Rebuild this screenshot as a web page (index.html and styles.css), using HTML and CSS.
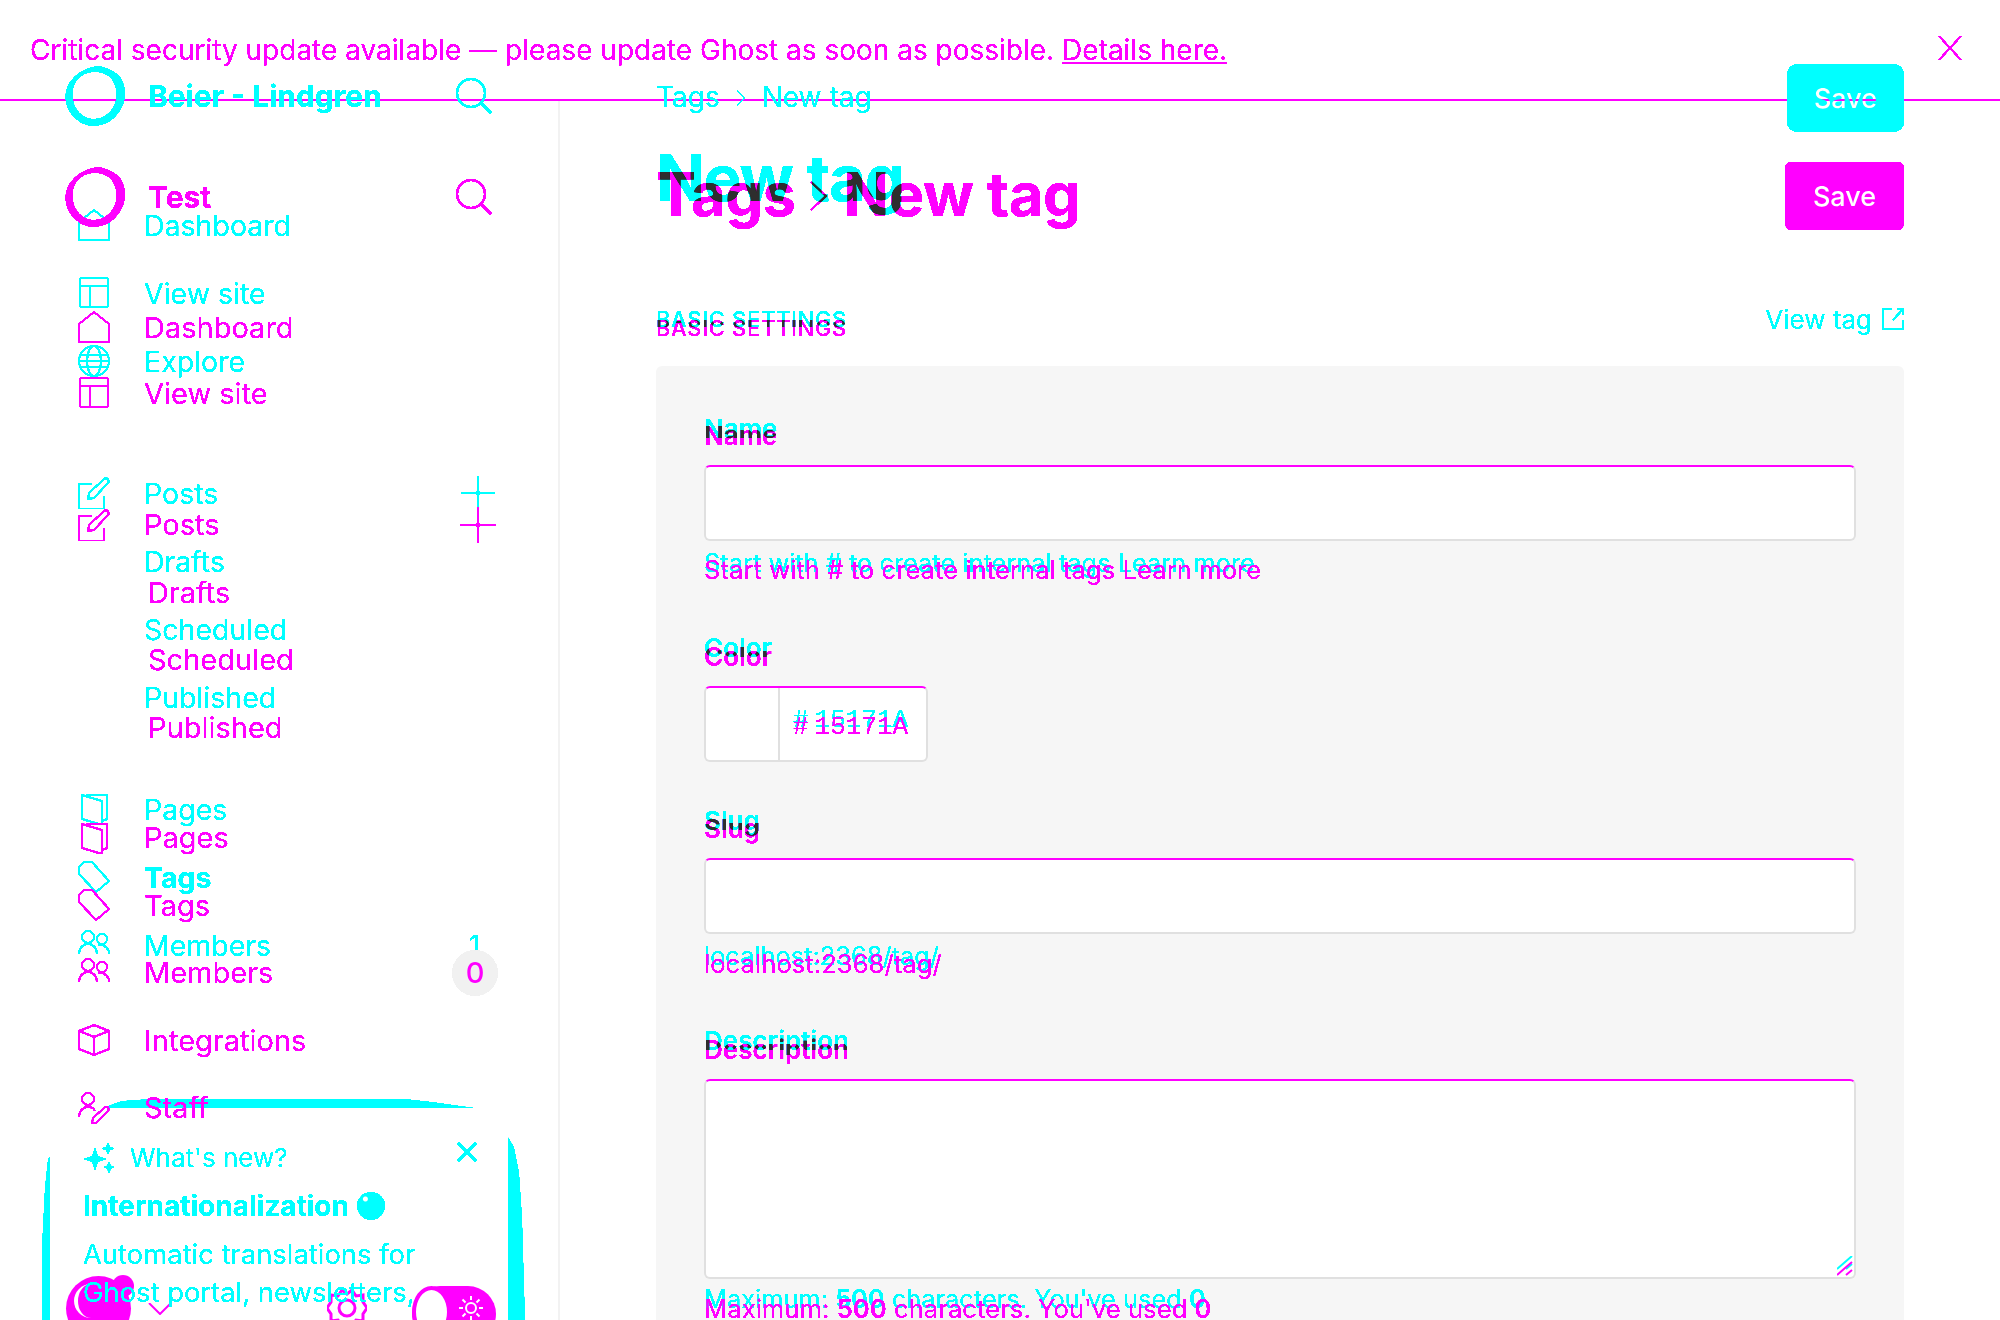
FILE: index.html
```html
<!DOCTYPE html>
<html lang="en">
<head>
    <meta charset="UTF-8">
    <title>Ghost Admin - New tag</title>
    <link rel="stylesheet" href="styles.css">
</head>
<body>
    <svg class="defs" xmlns="http://www.w3.org/2000/svg">
        <!-- hard edged ink, no antialiasing -->
        <filter id="hard" color-interpolation-filters="sRGB" x="0" y="0" width="100%" height="100%">
            <feComponentTransfer><feFuncA type="linear" slope="20" intercept="-6"/></feComponentTransfer>
        </filter>
        <!-- same, and pixels inked by both layers come out dark -->
        <filter id="overlap" color-interpolation-filters="sRGB" x="0" y="0" width="100%" height="100%">
            <feColorMatrix in="SourceGraphic" type="matrix" values="1 0 0 0 0  0 1 0 0 0  1 1 0 0 0  0 0 0 1 0" result="ink"/>
            <feColorMatrix in="SourceGraphic" type="matrix" values="0 0 0 0 .18  0 0 0 0 .18  0 0 0 0 .18  -1 -1 0 1 0" result="dark"/>
            <feMerge result="both"><feMergeNode in="ink"/><feMergeNode in="dark"/></feMerge>
            <feComponentTransfer in="both"><feFuncA type="linear" slope="20" intercept="-6"/></feComponentTransfer>
        </filter>
        <symbol id="i-logo" viewBox="0 0 60 60"><path fill="currentColor" fill-rule="evenodd" d="M33 0c8 1 23 7 25 18 3 9 2 20-5 29-6 8-15 13-25 13C14 60 0 47 0 31 0 15 14 2 33 0zM29 6C16 6 7 16 7 29c0 13 10 24 21 24 12 0 23-11 23-24C51 15 43 6 29 6z"/></symbol>
        <symbol id="i-search" viewBox="0 0 36 36"><circle cx="15" cy="15" r="14"/><path d="M25 25l10 10"/></symbol>
        <symbol id="i-home" viewBox="0 0 32 32"><path d="M1 13L16 1l15 12v18H1z"/></symbol>
        <symbol id="i-layout" viewBox="0 0 32 32"><rect x="2" y="1" width="28" height="29" rx="2"/><path d="M2 9h28M12 9v21"/></symbol>
        <symbol id="i-globe" viewBox="0 0 32 32"><circle cx="16" cy="16" r="15"/><ellipse cx="16" cy="16" rx="7" ry="15"/><path d="M3 10h26M3 22h26M1 16h30"/></symbol>
        <symbol id="i-post" viewBox="0 0 32 32"><path d="M14 7H1v25h25V19"/><path d="M11 16L26 2c3-2 6 1 4 4L16 21l-6 1z"/></symbol>
        <symbol id="i-pages" viewBox="0 0 32 32"><path d="M4 2l20 6v24L4 26z"/><path d="M8 2h21v24l-5 2"/></symbol>
        <symbol id="i-tag" viewBox="0 0 32 32"><path d="M1 13V6l5-5h8l17 19-13 11z"/></symbol>
        <symbol id="i-members" viewBox="0 0 32 32"><circle cx="10" cy="8" r="6"/><path d="M1 25c0-6 4-10 9-10s9 4 9 10"/><circle cx="24" cy="10" r="5"/><path d="M20 16c6-1 11 3 11 9"/></symbol>
        <symbol id="i-box" viewBox="0 0 32 32"><path d="M16 1l15 6v18l-15 6-15-6V7zM1 7l15 6 15-6M16 13v18"/></symbol>
        <symbol id="i-staff" viewBox="0 0 32 32"><circle cx="10" cy="7" r="6"/><path d="M1 25c0-6 4-10 9-10 3 0 6 1 7 4"/><path d="M15 26L27 15c2-1 5 1 3 4L18 31l-4 0z"/></symbol>
        <symbol id="i-plus" viewBox="0 0 36 36"><path d="M18 0v36M0 18h36"/></symbol>
        <symbol id="i-close" viewBox="0 0 24 24"><path d="M1 0l22 24M23 0L1 24"/></symbol>
        <symbol id="i-chevron" viewBox="0 0 18 30"><path d="M1 1l15 14L1 29"/></symbol>
        <symbol id="i-external" viewBox="0 0 22 22"><path d="M10 1H1v20h20v-9"/><path d="M11 12L21 1M15 1h6v6"/></symbol>
    </svg>

    <div class="screen">
        <div class="banner">
            <p class="banner-text">Critical security update available — please update Ghost as soon as possible. <a href="#">Details here.</a></p>
            <svg class="icon banner-close"><use href="#i-close"/></svg>
        </div>

        <div class="side-rule"></div>

        <!-- user bar, sits under the cyan card -->
        <div class="side-foot">
            <span class="avatar"><span class="avatar-shine"></span></span>
            <span class="avatar-dot"></span>
            <svg class="foot-chevron" viewBox="0 0 24 12"><path d="M1 0l11 11L23 0"/></svg>
            <svg class="foot-gear" viewBox="0 0 40 40">
                <path d="M15 1l5 4 5-4 4 6 7-1 0 7 4 6-4 6 0 7-7-1-4 6-5-4-5 4-4-6-7 1 0-7-4-6 4-6 0-7 7 1z"/>
                <circle cx="20" cy="19" r="8"/>
            </svg>
            <span class="toggle">
                <span class="toggle-knob"></span>
                <svg class="toggle-sun" viewBox="0 0 24 24"><circle cx="12" cy="12" r="5"/><path d="M12 0v4M12 20v4M0 12h4M20 12h4M3.5 3.5l3 3M17.5 17.5l3 3M3.5 20.5l3-3M17.5 6.5l3-3"/></svg>
            </span>
        </div>

        <aside class="side side-cyan">
            <div class="side-head">
                <svg class="side-logo"><use href="#i-logo"/></svg>
                <strong class="side-name">Beier - Lindgren</strong>
                <svg class="icon side-search"><use href="#i-search"/></svg>
            </div>
            <nav class="nav">
                <div class="nav-group">
                    <a class="nav-row"><svg class="icon nav-icon"><use href="#i-home"/></svg>Dashboard</a>
                    <a class="nav-row"><svg class="icon nav-icon"><use href="#i-layout"/></svg>View site</a>
                    <a class="nav-row"><svg class="icon nav-icon"><use href="#i-globe"/></svg>Explore</a>
                </div>
                <div class="nav-group">
                    <a class="nav-row"><svg class="icon nav-icon"><use href="#i-post"/></svg>Posts<svg class="icon nav-plus"><use href="#i-plus"/></svg></a>
                    <a class="nav-row nav-sub">Drafts</a>
                    <a class="nav-row nav-sub">Scheduled</a>
                    <a class="nav-row nav-sub">Published</a>
                </div>
                <div class="nav-group">
                    <a class="nav-row"><svg class="icon nav-icon"><use href="#i-pages"/></svg>Pages</a>
                    <a class="nav-row nav-active"><svg class="icon nav-icon"><use href="#i-tag"/></svg>Tags</a>
                    <a class="nav-row"><svg class="icon nav-icon"><use href="#i-members"/></svg>Members<span class="nav-count">1</span></a>
                </div>
            </nav>
            <section class="card">
                <svg class="card-edge" viewBox="0 0 500 233">
                    <path d="M70 21L90 14 118 12H373L400 15 443 21z"/>
                    <path d="M18 70L16 72 13 100 10 160V233H18z"/>
                    <path d="M476 50L482 60 487 85 490 130 493 233H476z"/>
                </svg>
                <div class="card-top">
                    <svg class="card-spark" viewBox="0 0 32 32"><path d="M12 5l3 9 9 3-9 3-3 9-3-9-9-3 9-3zM25 0l2 4.5 4.500 2-4.500 2L25 13l-2-4.500-4.500-2 4.500-2zM26 19l2 4.500 4 1.500-4 2-2 4.500-2-4.500-4-2 4-1.500z"/></svg>
                    <span class="card-kicker">What's new?</span>
                    <svg class="card-close" viewBox="0 0 20 20"><path d="M1 1l18 18M19 1L1 19"/></svg>
                </div>
                <h3 class="card-title">Internationalization<span class="card-globe"></span></h3>
                <p class="card-body">Automatic translations for<br>Ghost portal, newsletters,</p>
            </section>
        </aside>

        <aside class="side side-magenta">
            <div class="side-head">
                <svg class="side-logo"><use href="#i-logo"/></svg>
                <strong class="side-name">Test</strong>
                <svg class="icon side-search"><use href="#i-search"/></svg>
            </div>
            <nav class="nav">
                <div class="nav-group nav-group-tight">
                    <a class="nav-row"><svg class="icon nav-icon"><use href="#i-home"/></svg>Dashboard</a>
                    <a class="nav-row"><svg class="icon nav-icon"><use href="#i-layout"/></svg>View site</a>
                </div>
                <div class="nav-group">
                    <a class="nav-row"><svg class="icon nav-icon"><use href="#i-post"/></svg>Posts<svg class="icon nav-plus"><use href="#i-plus"/></svg></a>
                    <a class="nav-row nav-sub">Drafts</a>
                    <a class="nav-row nav-sub">Scheduled</a>
                    <a class="nav-row nav-sub">Published</a>
                </div>
                <div class="nav-group">
                    <a class="nav-row"><svg class="icon nav-icon"><use href="#i-pages"/></svg>Pages</a>
                    <a class="nav-row"><svg class="icon nav-icon"><use href="#i-tag"/></svg>Tags</a>
                    <a class="nav-row"><svg class="icon nav-icon"><use href="#i-members"/></svg>Members<span class="nav-badge">0</span></a>
                    <a class="nav-row"><svg class="icon nav-icon"><use href="#i-box"/></svg>Integrations</a>
                    <a class="nav-row"><svg class="icon nav-icon"><use href="#i-staff"/></svg>Staff</a>
                </div>
            </nav>
        </aside>

        <!-- grey panel and the empty fields, shared by both layers -->
        <div class="sheet">
            <div class="panel">
                <input class="field field-name" type="text" aria-label="Name">
                <div class="color-box">
                    <span class="color-swatch"></span>
                    <span class="color-value"></span>
                </div>
                <input class="field field-slug" type="text" aria-label="Slug">
                <div class="area-wrap">
                    <textarea class="field field-area" aria-label="Description"></textarea>
                    <svg class="grip" viewBox="0 0 16 20">
                        <path class="grip-cyan" d="M0 13L15 0M9 13l6-5"/>
                        <path class="grip-magenta" d="M0 19L15 6M9 19l6-5"/>
                    </svg>
                </div>
            </div>
        </div>

        <div class="ink">
            <main class="main main-cyan">
                <div class="main-bar">
                    <div class="crumbs">Tags<svg class="icon crumb-sep"><use href="#i-chevron"/></svg>New tag</div>
                    <button class="save"><span class="save-text">Save</span></button>
                </div>
                <h1 class="title">New tag</h1>
                <div class="section-head">
                    <h2 class="section-name">Basic settings</h2>
                    <a class="view-tag">View tag<svg class="icon view-icon"><use href="#i-external"/></svg></a>
                </div>
                <div class="form">
                    <label class="label l-name">Name</label>
                    <p class="hint h-name">Start with # to create internal tags Learn more</p>
                    <label class="label l-color">Color</label>
                    <p class="hex"><span class="hex-mark">#</span>15171A</p>
                    <label class="label l-slug">Slug</label>
                    <p class="hint h-slug">localhost:2368/tag/</p>
                    <label class="label l-desc">Description</label>
                    <p class="hint h-desc">Maximum: <b>500</b> characters. You've used <b>0</b></p>
                </div>
            </main>

            <main class="main main-magenta">
                <div class="main-bar">
                    <h1 class="title">Tags<svg class="icon title-sep"><use href="#i-chevron"/></svg>New tag</h1>
                    <button class="save"><span class="save-text">Save</span></button>
                </div>
                <div class="section-head">
                    <h2 class="section-name">Basic settings</h2>
                </div>
                <div class="form">
                    <label class="label l-name">Name</label>
                    <p class="hint h-name">Start with # to create internal tags Learn more</p>
                    <label class="label l-color">Color</label>
                    <p class="hex"><span class="hex-mark">#</span>15171A</p>
                    <label class="label l-slug">Slug</label>
                    <p class="hint h-slug">localhost:2368/tag/</p>
                    <label class="label l-desc">Description</label>
                    <p class="hint h-desc">Maximum: <b>500</b> characters. You've used <b>0</b></p>
                </div>
            </main>
        </div>
    </div>
</body>
</html>
```

FILE: styles.css
```css
body {
    margin: 0;
    background-color: #fff;
    font-family: 'Inter', 'Liberation Sans', sans-serif;
    font-size: 28px;
}
h1, h2, h3, p {
    margin: 0;
}
.defs {
    display: block;
    width: 0;
    height: 0;
}
.icon {
    display: block;
    fill: none;
    stroke: currentColor;
    stroke-width: 2;
    flex: none;
}

/* every region is stacked in the same grid cells */
.screen {
    display: grid;
    grid-template-columns: 560px 1fr;
    grid-template-rows: 1320px;
    width: 2000px;
    height: 1320px;
    overflow: hidden;
}
.banner {
    grid-area: 1 / 1 / 2 / 3;
    align-self: start;
    display: flex;
    align-items: center;
    justify-content: space-between;
    box-sizing: border-box;
    height: 101px;
    padding: 0 38px 0 30px;
    border-bottom: 2px solid #f0f;
    color: #f0f;
    filter: url(#hard);
}
.banner-text {
    font-size: 28px;
}
.banner-text a {
    color: inherit;
}
.banner-close {
    width: 24px;
    height: 24px;
    margin-bottom: 4px;
}

/* sidebar */
.side-rule {
    grid-area: 1 / 1;
    margin-top: 101px;
    border-right: 2px solid #f2f2f2;
}
.side-foot {
    grid-area: 1 / 1;
    display: flex;
    align-items: flex-start;
    height: 100px;
    margin-top: 1276px;
    padding-left: 66px;
    color: #f0f;
    position: relative;
}
.avatar {
    display: block;
    flex: none;
    width: 65px;
    height: 65px;
    border-radius: 50%;
    background-color: #f0f;
    overflow: hidden;
    position: relative;
}
.avatar-shine {
    position: absolute;
    left: 8px;
    top: 8px;
    width: 30px;
    height: 34px;
    border-radius: 50%;
    border-left: 4px solid #fff;
}
.avatar-dot {
    position: absolute;
    left: 112px;
    top: -1px;
    width: 22px;
    height: 22px;
    border-radius: 50%;
    background-color: #f0f;
}
.foot-chevron {
    flex: none;
    width: 24px;
    height: 12px;
    margin: 27px 0 0 17px;
    fill: none;
    stroke: currentColor;
    stroke-width: 2;
}
.foot-gear {
    flex: none;
    width: 40px;
    height: 40px;
    margin: 13px 0 0 155px;
    fill: none;
    stroke: currentColor;
    stroke-width: 3;
}
.toggle {
    display: flex;
    align-items: flex-start;
    justify-content: space-between;
    box-sizing: border-box;
    flex: none;
    width: 84px;
    height: 56px;
    margin: 10px 0 0 45px;
    padding-right: 13px;
    border-radius: 28px;
    background-color: #f0f;
}
.toggle-knob {
    box-sizing: border-box;
    width: 39px;
    height: 52px;
    border: 4px solid #f0f;
    border-radius: 50%;
    background-color: #fff;
}
.toggle-sun {
    width: 24px;
    height: 24px;
    margin-top: 10px;
    fill: none;
    stroke: #fff;
    stroke-width: 2;
}
.side {
    grid-area: 1 / 1;
    align-self: start;
    box-sizing: border-box;
    width: 560px;
    filter: url(#hard);
}
.side-cyan {
    padding-top: 66px;
    color: #0ff;
    font-size: 28.5px;
    --row: 68px;
    --nav-top: 65px;
}
.side-magenta {
    padding-top: 167px;
    color: #f0f;
    font-size: 29px;
    --row: 67.5px;
    --nav-top: 67px;
}
.side-head {
    display: flex;
    align-items: center;
    height: 60px;
    padding: 0 68px 0 65px;
}
.side-logo {
    display: block;
    flex: none;
    width: 61px;
    height: 60px;
}
.side-name {
    margin-left: 22px;
    font-size: 30px;
}
.side-search {
    width: 36px;
    height: 36px;
    margin-left: auto;
    stroke-width: 2.5;
}
.nav {
    margin-top: var(--nav-top);
}
.nav-group + .nav-group {
    margin-top: 44px;
}
.side-cyan .nav-group:nth-child(2) {
    margin-top: 64px;
}
.side-magenta .nav-group:nth-child(2) {
    margin-top: 65px;
}
.side-magenta .nav-group:nth-child(3) {
    margin-top: 43px;
}
.nav-group-tight {
    --row: 66px;
}
.nav-row {
    display: flex;
    align-items: center;
    height: var(--row);
    padding: 0 64px 0 78px;
}
.nav-icon {
    width: 32px;
    height: 32px;
    margin-right: 34px;
}
.nav-sub {
    padding-left: 144px;
}
.side-magenta .nav-sub {
    padding-left: 148px;
}
.nav-active {
    font-weight: 700;
}
.nav-plus {
    width: 36px;
    height: 36px;
    margin-left: auto;
    stroke-width: 2.5;
}
.side-cyan .nav-plus {
    width: 34px;
    height: 34px;
    margin-right: 1px;
}
.nav-count {
    margin-left: auto;
    margin-right: 16px;
}
.nav-badge {
    display: flex;
    align-items: center;
    justify-content: center;
    width: 46px;
    height: 46px;
    margin: 0 -2px 0 auto;
    border-radius: 50%;
    background-color: #f1f1f1;
    font-weight: 500;
    mix-blend-mode: multiply;
}
.card {
    position: relative;
    margin-top: 120px;
    padding: 40px 83px 0;
}
.card-edge {
    position: absolute;
    left: 32px;
    top: -12px;
    width: 500px;
    height: 233px;
    fill: #0ff;
}
.card-top {
    display: flex;
    align-items: flex-start;
    height: 32px;
    padding-top: 3px;
    font-size: 26px;
    line-height: 32px;
    position: relative;
}
.card-spark {
    flex: none;
    width: 32px;
    height: 32px;
    margin-right: 15px;
    fill: currentColor;
}
.card-close {
    flex: none;
    width: 20px;
    height: 20px;
    margin-left: auto;
    fill: none;
    stroke: currentColor;
    stroke-width: 3;
}
.card-title {
    display: flex;
    align-items: center;
    margin-top: 14px;
    font-size: 28px;
    font-weight: 700;
    line-height: 36px;
    position: relative;
}
.card-globe {
    width: 28px;
    height: 28px;
    margin-left: 8px;
    border-radius: 50%;
    background: radial-gradient(circle at 30% 25%, #fff 2px, #0ff 3px);
}
.card-body {
    margin-top: 11px;
    font-size: 27.4px;
    line-height: 38px;
    position: relative;
}

/* right hand side */
.sheet {
    grid-area: 1 / 2;
    padding: 366px 96px 0;
}
.panel {
    display: flex;
    flex-direction: column;
    align-items: flex-start;
    box-sizing: border-box;
    height: 1000px;
    padding: 99px 48px 0;
    border-radius: 6px 6px 0 0;
    background-color: #f6f6f6;
}
.field {
    display: block;
    box-sizing: border-box;
    width: 100%;
    height: 76px;
    margin: 0;
    padding: 0;
    border: 2px solid #e0e0e0;
    border-top-color: #f0f;
    border-radius: 6px;
    background-color: #fff;
    outline: none;
}
.color-box {
    display: flex;
    box-sizing: border-box;
    width: 224px;
    height: 76px;
    margin-top: 145px;
    border: 2px solid #e0e0e0;
    border-top-color: #f0f;
    border-radius: 6px;
    background-color: #fff;
}
.color-swatch {
    width: 72px;
    border-right: 2px solid #e0e0e0;
}
.field-slug {
    margin-top: 96px;
}
.area-wrap {
    position: relative;
    width: 100%;
    margin-top: 145px;
}
.field-area {
    height: 200px;
    resize: none;
}
.grip {
    position: absolute;
    right: 3px;
    bottom: 3px;
    width: 16px;
    height: 20px;
    fill: none;
    stroke-width: 2;
}
.grip-cyan {
    stroke: #0ff;
}
.grip-magenta {
    stroke: #f0f;
}

.ink {
    grid-area: 1 / 2;
    display: grid;
    isolation: isolate;
    filter: url(#overlap);
}
.main {
    grid-area: 1 / 1;
    padding: 0 96px;
}
.main-cyan {
    color: #0ff;
    --section-top: 89px;
    --hint-size: 25.4px;
}
.main-magenta {
    color: #f0f;
    --section-top: 82px;
    --hint-size: 25.7px;
}
/* only the headings and labels go dark where the two layers cross */
.main-magenta .title,
.main-magenta .section-name,
.main-magenta .label {
    mix-blend-mode: multiply;
}
.main-bar {
    display: flex;
    align-items: center;
    justify-content: space-between;
}
.main-cyan .main-bar {
    padding-top: 64px;
}
.main-magenta .main-bar {
    padding-top: 162px;
}
.crumbs {
    display: flex;
    align-items: center;
    margin-bottom: 2px;
}
.crumb-sep {
    width: 12px;
    height: 16px;
    margin: 2px 15px 0 15px;
}
.save {
    height: 68px;
    padding: 0;
    border: none;
    border-radius: 6px;
    color: #fff;
    font: 500 27px 'Inter', sans-serif;
}
.main-cyan .save {
    width: 117px;
    border-radius: 10px;
    background-color: #0ff;
}
/* the banner rule shows through the letters only */
.main-cyan .save-text {
    color: transparent;
    background: linear-gradient(#fff 53%, #f0f 53%, #f0f 59%, #fff 59%);
    -webkit-background-clip: text;
    background-clip: text;
}
.main-magenta .save {
    width: 119px;
    background-color: #f0f;
}
.title {
    font-weight: 700;
}
.main-cyan .title {
    margin-top: 10px;
    font-size: 64px;
    line-height: 72px;
    letter-spacing: -0.02em;
}
.main-magenta .title {
    display: flex;
    align-items: center;
    margin-bottom: 4px;
    font-size: 60px;
    line-height: 64px;
    letter-spacing: -0.01em;
}
.title-sep {
    width: 18px;
    height: 30px;
    margin: 4px 16px 0 14px;
}
.section-head {
    display: flex;
    align-items: center;
    justify-content: space-between;
    margin-top: var(--section-top);
    height: 32px;
}
.section-name {
    font-size: 22px;
    font-weight: 500;
    letter-spacing: 0.03em;
    line-height: 32px;
    text-transform: uppercase;
}
.view-tag {
    display: flex;
    align-items: center;
    font-size: 26px;
}
.view-icon {
    width: 22px;
    height: 22px;
    margin-left: 10px;
}
.form {
    padding: 0 48px;
}
.label {
    display: block;
    font-size: 26px;
    font-weight: 600;
    line-height: 32px;
}
.hint {
    font-size: var(--hint-size);
    line-height: 32px;
}
.hint b {
    font-weight: 600;
}
.hex {
    display: flex;
    padding-left: 89px;
    font-family: 'Liberation Mono', monospace;
    font-size: 26px;
    line-height: 32px;
}
.hex-mark {
    margin-right: 6px;
}
.main-cyan .l-name { margin-top: 78px; }
.main-cyan .h-name { margin-top: 102px; }
.main-cyan .l-color { margin-top: 53px; }
.main-cyan .hex { margin-top: 40px; }
.main-cyan .l-slug { margin-top: 69px; }
.main-cyan .h-slug { margin-top: 103px; }
.main-cyan .l-desc { margin-top: 53px; }
.main-cyan .h-desc { margin-top: 226px; }

.main-magenta .l-name { margin-top: 76px; }
.main-magenta .h-name { margin-top: 102px; }
.main-magenta .l-color { margin-top: 55px; }
.main-magenta .hex { margin-top: 38px; }
.main-magenta .l-slug { margin-top: 70px; }
.main-magenta .h-slug { margin-top: 103px; }
.main-magenta .l-desc { margin-top: 54px; }
.main-magenta .h-desc { margin-top: 227px; }
```
